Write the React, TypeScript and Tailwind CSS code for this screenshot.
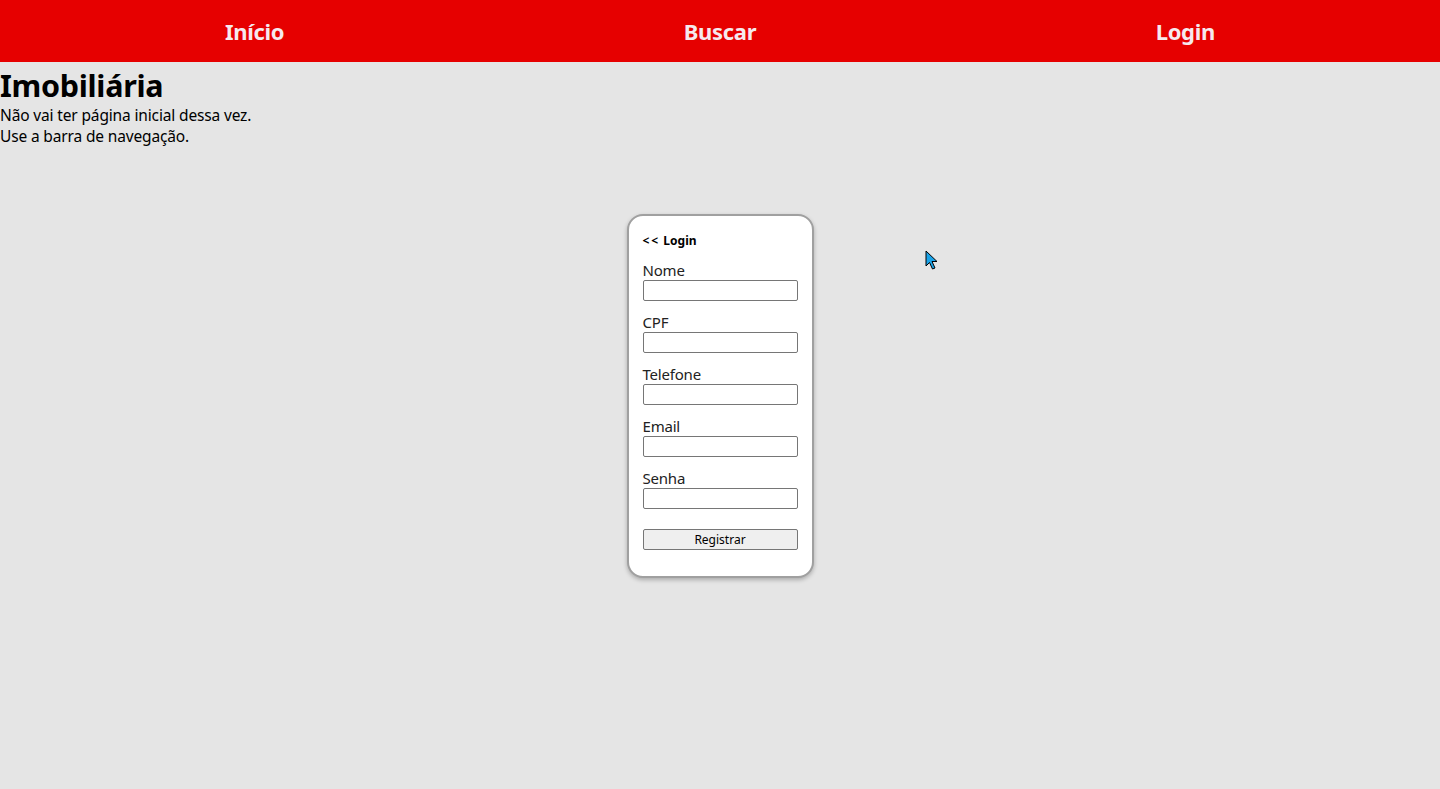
const fields = ['Nome', 'CPF', 'Telefone', 'Email', 'Senha'];

export default function App() {
  return (
    <div className="relative min-h-[789px] w-full bg-[#e5e5e5] text-black" style={{ fontFamily: '"Noto Sans", "Open Sans", sans-serif' }}>
      <nav className="h-[62px] bg-[#e60000]">
        <div className="mx-auto grid h-full w-[1396px] grid-cols-3 items-center text-center text-[22px] font-bold text-[#f6e9ee]">
          <a className="tracking-[-0.3px]">Início</a>
          <a className="tracking-[-0.3px]">Buscar</a>
          <a className="tracking-[-0.3px]">Login</a>
        </div>
      </nav>

      <h1 className="mt-[3px] text-[30.5px] leading-[40px] font-bold tracking-[-0.3px]">Imobiliária</h1>
      <p className="text-[15.5px] leading-[21px] tracking-[-0.15px]">Não vai ter página inicial dessa vez.</p>
      <p className="text-[15.5px] leading-[21px] tracking-[-0.15px]">Use a barra de navegação.</p>

      <div className="mx-auto mt-[67px] w-[187px] rounded-[16px] border-2 border-[#a0a0a0] bg-white px-[14px] pt-[17px] pb-[26px] shadow-[0_2px_4px_rgba(0,0,0,0.25)]">
        <div className="text-[12px] leading-[16px] font-bold">
          <span className="tracking-[2px]">&lt;&lt;</span> Login
        </div>
        <form className="mt-[11px]">
          {fields.map((f) => (
            <div key={f} className="mb-[11px]">
              <label className="block text-[15px] leading-[20px] text-[#222] tracking-[-0.2px]">{f}</label>
              <input className="block h-[21px] w-[155px] rounded-[2px] border border-[#767676] bg-white" />
            </div>
          ))}
          <button type="button" className="mt-[20px] block h-[21px] w-[155px] rounded-[2px] border border-[#767676] bg-[#efefef] text-[12px] leading-[19px] text-black">
            Registrar
          </button>
        </form>
      </div>

      <svg className="absolute left-[925px] top-[250px]" width="14" height="21" viewBox="0 0 14 21">
        <path d="M1 1 L1 16 L4.5 12.5 L7.5 19 L10 18 L7 11.5 L12 11.5 Z" fill="#1aa3e8" stroke="#000" strokeWidth="1" strokeLinejoin="round" />
      </svg>
    </div>
  );
}
